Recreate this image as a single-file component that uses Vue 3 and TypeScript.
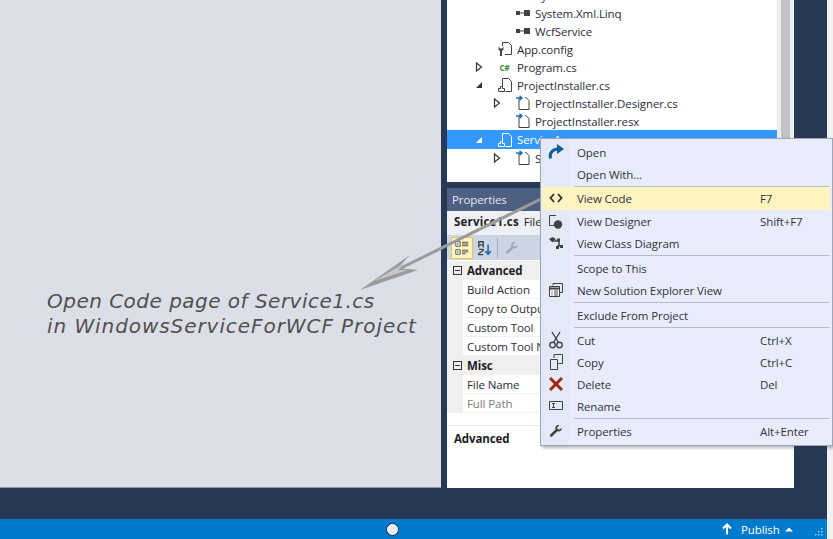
<script setup lang="ts">
interface TreeRow { label: string; level: number; icon: string; exp?: string; selected?: boolean }
interface PropRow { label: string; cat?: boolean; muted?: boolean }
interface MenuItem { label?: string; key?: string; icon?: string; sep?: boolean; hot?: boolean }

const tree: TreeRow[] = [
  { label: 'System.Xml', level: 2, icon: 'ref' },
  { label: 'System.Xml.Linq', level: 2, icon: 'ref' },
  { label: 'WcfService', level: 2, icon: 'ref' },
  { label: 'App.config', level: 1, icon: 'config' },
  { label: 'Program.cs', level: 1, icon: 'cs', exp: 'open' },
  { label: 'ProjectInstaller.cs', level: 1, icon: 'page', exp: 'solid' },
  { label: 'ProjectInstaller.Designer.cs', level: 2, icon: 'linked', exp: 'open' },
  { label: 'ProjectInstaller.resx', level: 2, icon: 'linked' },
  { label: 'Service1.cs', level: 1, icon: 'page', exp: 'solid', selected: true },
  { label: 'Service1.Designer.cs', level: 2, icon: 'linked', exp: 'open' },
]

const props: PropRow[] = [
  { label: 'Advanced', cat: true },
  { label: 'Build Action' },
  { label: 'Copy to Output Directory' },
  { label: 'Custom Tool' },
  { label: 'Custom Tool Namespace' },
  { label: 'Misc', cat: true },
  { label: 'File Name' },
  { label: 'Full Path', muted: true },
]

const menu: MenuItem[] = [
  { label: 'Open', icon: 'open' },
  { label: 'Open With...' },
  { sep: true },
  { label: 'View Code', key: 'F7', icon: 'code', hot: true },
  { label: 'View Designer', key: 'Shift+F7', icon: 'designer' },
  { label: 'View Class Diagram', icon: 'diagram' },
  { sep: true },
  { label: 'Scope to This' },
  { label: 'New Solution Explorer View', icon: 'newview' },
  { sep: true },
  { label: 'Exclude From Project' },
  { sep: true },
  { label: 'Cut', key: 'Ctrl+X', icon: 'cut' },
  { label: 'Copy', key: 'Ctrl+C', icon: 'copy' },
  { label: 'Delete', key: 'Del', icon: 'delete' },
  { label: 'Rename', icon: 'rename' },
  { sep: true },
  { label: 'Properties', key: 'Alt+Enter', icon: 'wrench' },
]
</script>

<template>
  <div class="screen">
    <div class="shell">
      <div class="workspace">
        <div class="editor"></div>
        <div class="side">
          <div class="explorer">
            <ul class="tree">
              <li
                v-for="row in tree"
                :key="row.label"
                class="tree-row"
                :class="{ selected: row.selected }"
                :style="{ paddingLeft: (row.level - 1) * 18 + 'px' }"
              >
                <span class="exp">
                  <svg v-if="row.exp === 'open'" width="8" height="10" viewBox="0 0 8 10">
                    <path d="M1.5 1v8L6.5 5z" fill="#fff" stroke="#333" stroke-width="1.2" />
                  </svg>
                  <svg v-else-if="row.exp === 'solid'" width="8" height="8" viewBox="0 0 8 8">
                    <path d="M7 1v6H1z" :fill="row.selected ? '#fff' : '#333'" />
                  </svg>
                </span>
                <span class="tree-icon">
                  <svg v-if="row.icon === 'ref'" width="16" height="16" viewBox="0 0 16 16">
                    <path d="M1 6h4v4H1zM9 5h6v6H9z" fill="#424242" />
                    <path d="M5 8h4" stroke="#424242" />
                  </svg>
                  <svg v-else-if="row.icon === 'config'" width="16" height="16" viewBox="0 0 16 16">
                    <path d="M5.5 5V1.5h6l3 3v9H8" fill="none" stroke="#424242" />
                    <path d="M1.5 5.5v3l1.5 1.5V15h2v-5l1.5-1.5v-3L5 7.500H3z" fill="#424242" />
                  </svg>
                  <span v-else-if="row.icon === 'cs'" class="cs-mark">C#</span>
                  <svg v-else-if="row.icon === 'page'" width="16" height="16" viewBox="0 0 16 16">
                    <path
                      d="M5.500 9V1.500h6l3 3v10H8.500"
                      fill="none"
                      :stroke="row.selected ? '#fff' : '#424242'"
                    />
                    <path
                      d="M1.500 11.500h2v-2h2v2h2v3h-6z"
                      fill="none"
                      :stroke="row.selected ? '#fff' : '#424242'"
                    />
                  </svg>
                  <svg v-else width="16" height="16" viewBox="0 0 16 16">
                    <path d="M6 3.500h-2v11h10v-9l-3-3H10" fill="none" stroke="#424242" />
                    <path d="M1 3h5M4.500 .8 7 3 4.500 5.200" fill="none" stroke="#1c6fb4" stroke-width="1.500" />
                  </svg>
                </span>
                <span class="tree-label">{{ row.label }}</span>
              </li>
            </ul>
            <div class="scrollbar"><div class="thumb"></div></div>
          </div>

          <div class="properties">
            <div class="prop-title">Properties</div>
            <div class="prop-file"><b>Service1.cs</b> File Properties</div>
            <div class="prop-tools">
              <span class="tool active">
                <svg width="16" height="16" viewBox="0 0 18 18">
                  <path d="M2 2h5v5H2z" fill="#fff" stroke="#424242" />
                  <path d="M2 11h5v5H2z" fill="#fff" stroke="#424242" />
                  <path d="M3.500 4.500h2M3.500 13.500h2" stroke="#424242" />
                  <path d="M9 2.500h7M9 4.500h7M9 6.500h7M9 11.500h7M9 13.500h7M9 15.500h4" stroke="#424242" />
                </svg>
              </span>
              <span class="tool plain">
                <svg width="16" height="16" viewBox="0 0 18 18">
                  <path d="M2 8.500V2h5v6.500M2 5.500h5" fill="none" stroke="#424242" stroke-width="1.500" />
                  <path d="M2 10.500h5v1.300L2 15.200v1.300h5" fill="none" stroke="#424242" stroke-width="1.500" />
                  <path d="M12.500 5v11M9.500 12.500l3 3.500 3-3.500" fill="none" stroke="#1c6fb4" stroke-width="1.800" />
                </svg>
              </span>
              <span class="tool-sep"></span>
              <span class="tool plain">
                <svg width="14" height="14" viewBox="0 0 16 16">
                  <path d="M14.500 4.200 11.800 6.500 9.800 5.800 9.400 3.700 12 1.300C9.800.6 7.300 2 7.200 4.400c0 .8.100 1.300.3 1.800L1.500 12c-.8 1-.5 1.900.1 2.400.7.500 1.500.4 2.200-.3l5.800-5.800c2.800.8 5.400-1.300 4.900-4.100z" fill="#a4a7ae" />
                </svg>
              </span>
            </div>
            <div class="prop-grid">
              <div v-for="p in props" :key="p.label" class="prop-row" :class="{ cat: p.cat, muted: p.muted }">
                <span class="gutter"><i v-if="p.cat" class="minus"></i></span>
                <span class="prop-name">{{ p.label }}</span>
              </div>
            </div>
            <div class="prop-desc"><b>Advanced</b></div>
          </div>
        </div>
      </div>

      <div class="status">
        <span class="status-spot"></span>
        <span class="publish">
          <svg width="10" height="12" viewBox="0 0 10 12">
            <path d="M5 11.500V2M1 5.500 5 1.500l4 4" fill="none" stroke="#fff" stroke-width="2" />
          </svg>
          <span class="publish-text">Publish</span>
          <svg width="8" height="5" viewBox="0 0 8 5"><path d="M0 4.500 4 .5l4 4z" fill="#fff" /></svg>
        </span>
        <svg class="grip" width="8" height="8" viewBox="0 0 8 8">
          <path d="M6 0h1.500v1.500H6zM3 3h1.500v1.500H3zM6 3h1.500v1.500H6zM0 6h1.500v1.500H0zM3 6h1.500v1.500H3zM6 6h1.500v1.500H6z" fill="#9ccbec" />
        </svg>
      </div>
    </div>

    <p class="note">
      <span class="note-first">Open Code page of Service1.cs</span>
      <span class="note-second">in WindowsServiceForWCF Project</span>
    </p>

    <svg class="pointer" width="200" height="110" viewBox="350 190 200 110">
      <path d="M541 199 400 268.500" stroke="#9b9b9b" stroke-width="3" fill="none" />
      <path d="M360 290 410 255 398 268 418 270z" fill="#9b9b9b" />
      <path d="M374 281 405 263 398 270 408 270z" fill="#c4c6cc" />
    </svg>

    <ul class="menu">
      <template v-for="(m, i) in menu" :key="i">
        <li v-if="m.sep" class="menu-sep"></li>
        <li v-else class="menu-item" :class="{ hot: m.hot }">
          <span class="menu-icon">
            <svg v-if="m.icon === 'open'" width="18" height="16" viewBox="0 0 18 16">
              <path d="M3.500 14.500C2 8.500 6 4.800 12 5" fill="none" stroke="#0e5c9c" stroke-width="3" />
              <path d="M10 0l7 5-7 5z" fill="#0e5c9c" />
            </svg>
            <svg v-else-if="m.icon === 'code'" width="14" height="10" viewBox="0 0 14 10">
              <path d="M5 1 1.500 5 5 9M9 1l3.500 4L9 9" fill="none" stroke="#2c2c3a" stroke-width="1.800" />
            </svg>
            <svg v-else-if="m.icon === 'designer'" width="16" height="16" viewBox="0 0 16 16">
              <path d="M8 2.500H1.500v10H6" fill="none" stroke="#424242" />
              <circle cx="10" cy="11.500" r="4.200" fill="#424242" />
            </svg>
            <svg v-else-if="m.icon === 'diagram'" width="16" height="14" viewBox="0 0 16 14">
              <path d="M1 3 4.500 1 8 3 4.500 6.500z" fill="#424242" />
              <path d="M6 5h5v5M9 10h5" fill="none" stroke="#424242" stroke-width="1.500" />
              <path d="M9 2.500h3v3H9zM12 9h3v3h-3zM8 10h3v3H8z" fill="#424242" />
            </svg>
            <svg v-else-if="m.icon === 'newview'" width="16" height="16" viewBox="0 0 16 16">
              <path d="M5 3.500V1.500h9.500v9H12" fill="none" stroke="#424242" />
              <path d="M1.500 4.500h10v10h-10z" fill="#fff" stroke="#424242" />
              <path d="M1.500 6.500h10" stroke="#424242" stroke-width="2" />
              <path d="M3.500 9h1M6 9h4M3.500 11h1M6 11h4M3.500 13h1M6 13h4" stroke="#424242" />
            </svg>
            <svg v-else-if="m.icon === 'cut'" width="14" height="18" viewBox="0 0 14 18">
              <path d="M3 1 9.500 11.500M11 1 4.500 11.500" fill="none" stroke="#424242" stroke-width="1.400" />
              <circle cx="3.500" cy="14" r="2.700" fill="none" stroke="#424242" stroke-width="1.400" />
              <circle cx="10.500" cy="14" r="2.700" fill="none" stroke="#424242" stroke-width="1.400" />
            </svg>
            <svg v-else-if="m.icon === 'copy'" width="14" height="16" viewBox="0 0 14 16">
              <path d="M5 4V.5h8.500v9H9.500" fill="none" stroke="#424242" />
              <path d="M1.500 5.500h7v10h-7z" fill="none" stroke="#424242" />
            </svg>
            <svg v-else-if="m.icon === 'delete'" width="14" height="14" viewBox="0 0 14 14">
              <path d="M1 1l12 12M13 1 1 13" stroke="#a1260d" stroke-width="3" />
            </svg>
            <svg v-else-if="m.icon === 'rename'" width="14" height="10" viewBox="0 0 14 10">
              <path d="M.5.500h13v8h-13z" fill="none" stroke="#424242" />
              <path d="M3 2.500h3M3 6.500h3M4.500 2.500v4" stroke="#424242" />
            </svg>
            <svg v-else-if="m.icon === 'wrench'" width="14" height="14" viewBox="0 0 16 16">
              <path d="M14.500 4.200 11.800 6.500 9.800 5.800 9.400 3.700 12 1.300C9.800.6 7.300 2 7.200 4.400c0 .8.100 1.300.3 1.800L1.500 12c-.8 1-.5 1.900.1 2.400.7.500 1.500.4 2.200-.3l5.800-5.800c2.800.8 5.400-1.300 4.900-4.100z" fill="#424242" />
            </svg>
          </span>
          <span class="menu-label">{{ m.label }}</span>
          <span class="menu-key">{{ m.key }}</span>
        </li>
      </template>
    </ul>
  </div>
</template>

<style>
html, body { margin: 0; background: #f1f1f1; }
</style>

<style scoped>
.screen {
  position: relative;
  width: 833px;
  height: 539px;
  overflow: hidden;
  background: #f1f1f1;
  font-family: "Open Sans", "Noto Sans", sans-serif;
  font-size: 11.5px;
  letter-spacing: -0.1px;
  color: #2a2c38;
}
.shell {
  display: flex;
  flex-direction: column;
  width: 827px;
  height: 539px;
  background: #293955;
}
.workspace { display: flex; height: 488px; margin-bottom: 31px; }
.editor {
  width: 441px;
  height: 488px;
  box-sizing: border-box;
  background: #dcdfe7;
  border-bottom: 1px solid #8e9ab0;
}
.side {
  display: flex;
  flex-direction: column;
  gap: 6px;
  width: 347px;
  margin-left: 6px;
}
.explorer { display: flex; height: 182px; overflow: hidden; background: #fff; }
.tree { flex: 1; margin: -14px 0 0; padding: 0; list-style: none; }
.tree-row { display: flex; align-items: center; height: 18px; }
.tree-row.selected { background: #3399ff; color: #fff; height: 19px; }
.exp { display: flex; justify-content: center; align-items: center; width: 18px; margin-left: 23px; flex: none; }
.tree-icon { display: flex; justify-content: center; align-items: center; width: 17px; margin: 0 4px 0 8px; flex: none; }
.cs-mark { color: #388a34; font-size: 8px; font-weight: 700; }
.tree-label { white-space: nowrap; }
.scrollbar { width: 17px; background: #eeeef2; padding: 0 4px; box-sizing: border-box; }
.thumb { height: 100%; background: #c2c3c9; }
.properties {
  display: flex;
  flex-direction: column;
  height: 300px;
  background: #fff;
}
.prop-title {
  height: 23px;
  line-height: 23px;
  padding-left: 5px;
  background: #4d6082;
  color: #e4e8f0;
}
.prop-file { height: 24px; line-height: 22px; padding-left: 7px; background: #eef0f6; white-space: nowrap; color: #1c1c24; }
.prop-file b { letter-spacing: 0.2px; margin-right: 2px; }
.prop-tools {
  display: flex;
  align-items: center;
  height: 25px;
  padding-left: 4px;
  background: #ccd5e5;
}
.tool { display: flex; justify-content: center; align-items: center; height: 22px; box-sizing: border-box; }
.tool.active { width: 22px; background: #fdf4bf; border: 1px solid #e5c365; }
.tool.plain { width: 18px; margin-left: 3px; }
.tool-sep { width: 1px; height: 20px; background: #a4acbc; margin: 0 2px 0 3px; }
.prop-grid { margin-top: 1px; }
.prop-row { display: flex; align-items: center; height: 19px; box-sizing: border-box; border-bottom: 1px solid #f0f0f0; }
.prop-row.cat { background: #f0f0f0; font-weight: 700; color: #1c1c24; }
.prop-row.muted { color: #7b7b80; }
.gutter { display: flex; justify-content: center; align-items: center; width: 16px; height: 100%; margin-right: 4px; background: #f0f0f0; flex: none; }
.minus { position: relative; width: 9px; height: 9px; box-sizing: border-box; border: 1px solid #333; margin-left: 4px; }
.minus::after { content: ""; position: absolute; left: 1px; top: 3px; width: 5px; height: 1px; background: #333; }
.prop-name { white-space: nowrap; }
.prop-desc { margin-top: 12px; padding: 5px 7px; border-top: 1px solid #e6e6ea; color: #1c1c24; }
.status {
  display: flex;
  align-items: center;
  height: 20px;
  background: #007acc;
  color: #fff;
}
.status-spot {
  width: 9px;
  height: 9px;
  margin-left: 387px;
  border: 1.500px solid #fff;
  border-radius: 50%;
  background: #e8ecf4;
  box-shadow: 0 0 0 1px #17406a;
  box-sizing: content-box;
}
.publish { display: flex; align-items: center; margin-left: 324px; }
.publish-text { margin: 0 5px 0 9px; }
.grip { margin-left: 22px; margin-top: 6px; }
.note {
  position: absolute;
  left: 47px;
  top: 289px;
  margin: 0;
  font-family: "DejaVu Sans", sans-serif;
  font-style: oblique;
  font-size: 20px;
  line-height: 25px;
  color: #505050;
  white-space: nowrap;
}
.note-first { display: block; letter-spacing: 0.48px; }
.note-second { display: block; letter-spacing: 0.93px; }
.pointer { position: absolute; left: 350px; top: 190px; }
.menu {
  position: absolute;
  left: 540px;
  top: 138px;
  width: 293px;
  height: 308px;
  margin: 0;
  padding: 3px 2px 0 1px;
  box-sizing: border-box;
  list-style: none;
  background: linear-gradient(90deg, #e4e9f8 0 28px, #e9edfb 28px);
  border: 1px solid #a0a5b4;
  box-shadow: 2px 2px 3px rgba(40, 50, 70, 0.35);
  color: #2f3244;
}
.menu-item { display: flex; align-items: center; height: 22px; padding: 0 0 2px 2px; box-sizing: border-box; }
.menu-item.hot { background: #fdf4bf; margin: -2px 0 1px; height: 23px; padding-bottom: 1px; }
.menu-icon { display: flex; justify-content: center; align-items: center; width: 24px; flex: none; }
.menu-label { width: 183px; margin-left: 9px; white-space: nowrap; flex: none; }
.menu-key { white-space: nowrap; }
.menu-sep { height: 3px; margin-left: 32px; margin-right: 1px; box-sizing: border-box; border-top: 1px solid #b6bccb; }
</style>
